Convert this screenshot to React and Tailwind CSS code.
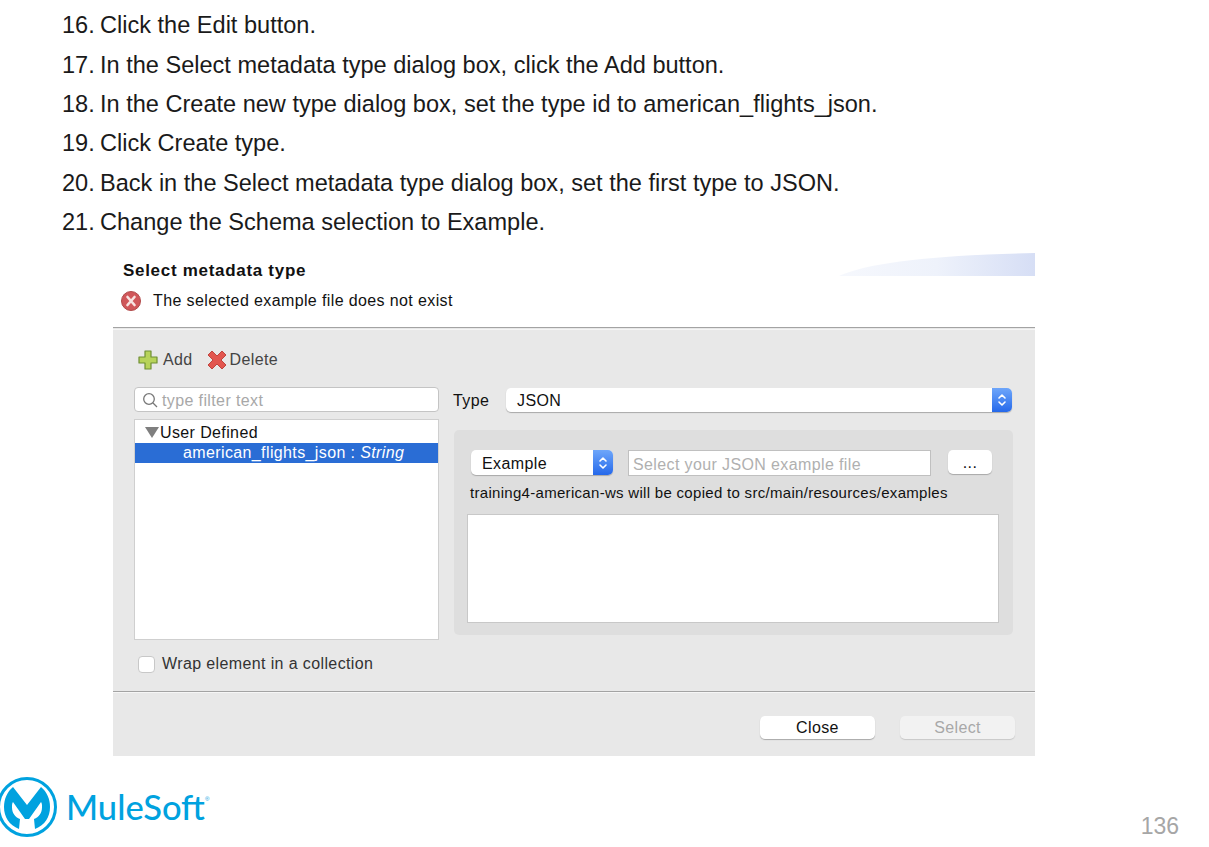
const steps = [
  ["16.", "Click the Edit button."],
  ["17.", "In the Select metadata type dialog box, click the Add button."],
  ["18.", "In the Create new type dialog box, set the type id to american_flights_json."],
  ["19.", "Click Create type."],
  ["20.", "Back in the Select metadata type dialog box, set the first type to JSON."],
  ["21.", "Change the Schema selection to Example."],
];

function Stepper({ className }) {
  return (
    <div className={"flex items-center justify-center bg-gradient-to-b from-[#6ea6fa] to-[#2568ea] " + className}>
      <svg width="10" height="16" viewBox="0 0 10 16" fill="none" stroke="#fff" strokeWidth="1.6" strokeLinecap="round" strokeLinejoin="round">
        <path d="M2 6 L5 3 L8 6" />
        <path d="M2 10 L5 13 L8 10" />
      </svg>
    </div>
  );
}

function Logo() {
  return (
    <svg width="60" height="64" viewBox="0 0 60 64" className="ml-[-2px] shrink-0">
      <circle cx="29" cy="32" r="28.5" fill="none" stroke="#00a2df" strokeWidth="3" />
      <path fill="#00a2df" d="M21 54 C11 50 6 42 6 32 C6 24 9 17 15 12 L29 30 L43 12 C49 17 52 24 52 32 C52 42 47 50 37 54 L36 44 C41 42 44 38 44 32 C44 30 44 28 43 27 L31 44 L27 44 L15 27 C14 28 14 30 14 32 C14 38 17 42 22 44 Z" />
    </svg>
  );
}

export default function App() {
  return (
    <div className="w-[1209px] h-[847px] overflow-hidden bg-white font-['Liberation_Sans',sans-serif]">
      <ol className="h-[242px] pt-[6.4px] pl-[62px] text-[23.55px] leading-[39.3px] text-[#1a1a1a]">
        {steps.map(([n, t]) => (
          <li key={n} className="flex">
            <span className="w-[38px] shrink-0">{n}</span>
            <span>{t}</span>
          </li>
        ))}
      </ol>

      <div className="relative ml-[113px] mt-[11px] w-[922px] h-[503px] flex flex-col text-[16px] tracking-[0.38px] text-[#222] font-['Liberation_Sans',sans-serif]">
        {/* Header */}
        <div className="relative h-[74px] shrink-0 bg-white pl-[10px] pt-[7px]">
          <svg className="absolute right-0 top-0" width="196" height="23" viewBox="0 0 196 23">
            <defs>
              <linearGradient id="hg" x1="0" x2="1" y1="0" y2="0">
                <stop offset="0" stopColor="#f6f8fd" />
                <stop offset="0.5" stopColor="#eef2fb" />
                <stop offset="1" stopColor="#d6def5" />
              </linearGradient>
            </defs>
            <path d="M0 23 C30 9 100 2 196 0 L196 23 Z" fill="url(#hg)" />
          </svg>
          <div className="font-bold text-[17px] leading-[21px] text-[#111] tracking-[0.7px]">Select metadata type</div>
          <div className="flex items-center mt-[9px] ml-[-2px] h-[22px]">
            <svg width="20" height="20" viewBox="0 0 20 20" className="shrink-0">
              <circle cx="10" cy="10" r="9.5" fill="#d0575a" stroke="#b04a4a" strokeWidth="1" />
              <path d="M6.5 6 L13.5 14 M13.5 6 L6.5 14" stroke="#f8e4e2" strokeWidth="2.6" strokeLinecap="round" />
            </svg>
            <span className="ml-[12px] text-[#111]">The selected example file does not exist</span>
          </div>
        </div>

        {/* Body */}
        <div className="h-[364px] shrink-0 bg-[#e8e8e8] border-t border-t-[#a3a3a3] pt-[1px]">
          <div className="h-full border-t border-t-[#f6f6f6] pl-[21px] pr-[22px]">
            <div className="flex items-center h-[24px] mt-[18px] ml-[4px] text-[#444]">
              <svg width="20" height="20" viewBox="0 0 20 20" className="shrink-0">
                <path d="M7 1 H13 V7 H19 V13 H13 V19 H7 V13 H1 V7 H7 Z" fill="#b7d35a" stroke="#6f8f33" strokeWidth="1.2" strokeLinejoin="round" />
              </svg>
              <span className="ml-[5px]">Add</span>
              <svg width="20" height="20" viewBox="0 0 20 20" className="shrink-0 ml-[14px]">
                <path d="M5 1 L10 6 L15 1 L19 5 L14 10 L19 15 L15 19 L10 14 L5 19 L1 15 L6 10 L1 5 Z" fill="#e2564f" stroke="#c0443e" strokeWidth="1" strokeLinejoin="round" />
              </svg>
              <span className="ml-[3px]">Delete</span>
            </div>

            <div className="flex mt-[15px]">
              {/* Left */}
              <div className="w-[305px] shrink-0">
                <div className="flex items-center h-[25px] bg-white rounded-[4px] border border-[#c4c4c4] pl-[7px] text-[#a8a8a8]">
                  <svg width="16" height="16" viewBox="0 0 16 16" fill="none" stroke="#777" strokeWidth="1.3" className="shrink-0">
                    <circle cx="7" cy="7" r="5.3" />
                    <path d="M11 11 L15 15" />
                  </svg>
                  <span className="ml-[4px] pt-[2px]">type filter text</span>
                </div>
                <div className="mt-[7px] h-[221px] bg-white border border-[#cfcfcf] pt-[2px]">
                  <div className="flex items-center h-[21px] pl-[10px] text-[#111]">
                    <span className="w-0 h-0 border-x-[7px] border-x-transparent border-t-[11px] border-t-[#7f7f7f]" />
                    <span className="ml-[1px]">User Defined</span>
                  </div>
                  <div className="h-[20px] leading-[20px] bg-[#2a6dd5] text-white pl-[48px]">
                    american_flights_json : <span className="italic">String</span>
                  </div>
                </div>
                <div className="flex items-center mt-[14px] ml-[4px] h-[20px] text-[#333]">
                  <span className="w-[17px] h-[17px] bg-white rounded-[4px] border border-[#c8c8c8]" />
                  <span className="ml-[7px]">Wrap element in a collection</span>
                </div>
              </div>

              {/* Right */}
              <div className="flex-1 ml-[15px]">
                <div className="flex items-center h-[25px] ml-[-1px]">
                  <span className="w-[53px] shrink-0 text-[#111] pt-[3px]">Type</span>
                  <div className="flex-1 flex h-[24px] mt-[1px] mr-[1px] bg-white rounded-[5px] overflow-hidden shadow-[0_1px_1px_#a8a8a8]">
                    <span className="flex-1 pl-[11px] leading-[26px] text-[#111]">JSON</span>
                    <Stepper className="w-[20px]" />
                  </div>
                </div>
                <div className="mt-[18px] h-[205px] bg-[#dedede] rounded-[5px] pl-[13px] pr-[14px] pt-[20px]">
                  <div className="flex items-start pl-[4px]">
                    <div className="flex w-[142px] h-[25px] bg-white rounded-[5px] overflow-hidden shadow-[0_1px_1px_#a8a8a8]">
                      <span className="flex-1 pl-[11px] leading-[27px] text-[#111]">Example</span>
                      <Stepper className="w-[20px]" />
                    </div>
                    <div className="ml-[15px] w-[303px] h-[26px] bg-white border border-[#c0c0c0] pl-[4px] leading-[27px] text-[#b0b0b0]">
                      Select your JSON example file
                    </div>
                    <div className="ml-[17px] w-[44px] h-[24px] bg-white rounded-[5px] shadow-[0_1px_1px_#a8a8a8] text-center leading-[26px] text-[#111]">
                      ...
                    </div>
                  </div>
                  <div className="mt-[6px] pl-[3px] h-[22px] leading-[22px] text-[15px] tracking-[0.3px] text-[#111]">
                    training4-american-ws will be copied to src/main/resources/examples
                  </div>
                  <div className="mt-[10px] h-[109px] bg-white border border-[#c8c8c8]" />
                </div>
              </div>
            </div>
          </div>
        </div>

        {/* Footer */}
        <div className="flex-1 bg-[#e8e8e8] border-t border-t-[#a3a3a3]">
          <div className="h-full border-t border-t-[#f6f6f6] flex justify-end items-start pt-[23px] pr-[20px] gap-[25px]">
            <div className="w-[115px] h-[23px] bg-white rounded-[5px] shadow-[0_1px_1px_#a8a8a8] text-center leading-[24px] text-[#111]">Close</div>
            <div className="w-[115px] h-[23px] bg-[#f2f2f2] rounded-[5px] shadow-[0_1px_1px_#c8c8c8] text-center leading-[24px] text-[#a8a8a8]">Select</div>
          </div>
        </div>
      </div>

      {/* Page footer */}
      <div className="flex items-start justify-between mt-[19px] pr-[30px]">
        <div className="flex items-center">
          <Logo />
          <span className="ml-[8px] text-[34.5px] font-medium leading-[64px] text-[#00a2df] font-['Lato',sans-serif]">MuleSoft</span>
          <span className="text-[6px] text-[#00a2df] self-start mt-[20px]">®</span>
        </div>
        <span className="text-[23px] leading-[28px] mt-[37px] text-[#a6a6a6]">136</span>
      </div>
    </div>
  );
}
